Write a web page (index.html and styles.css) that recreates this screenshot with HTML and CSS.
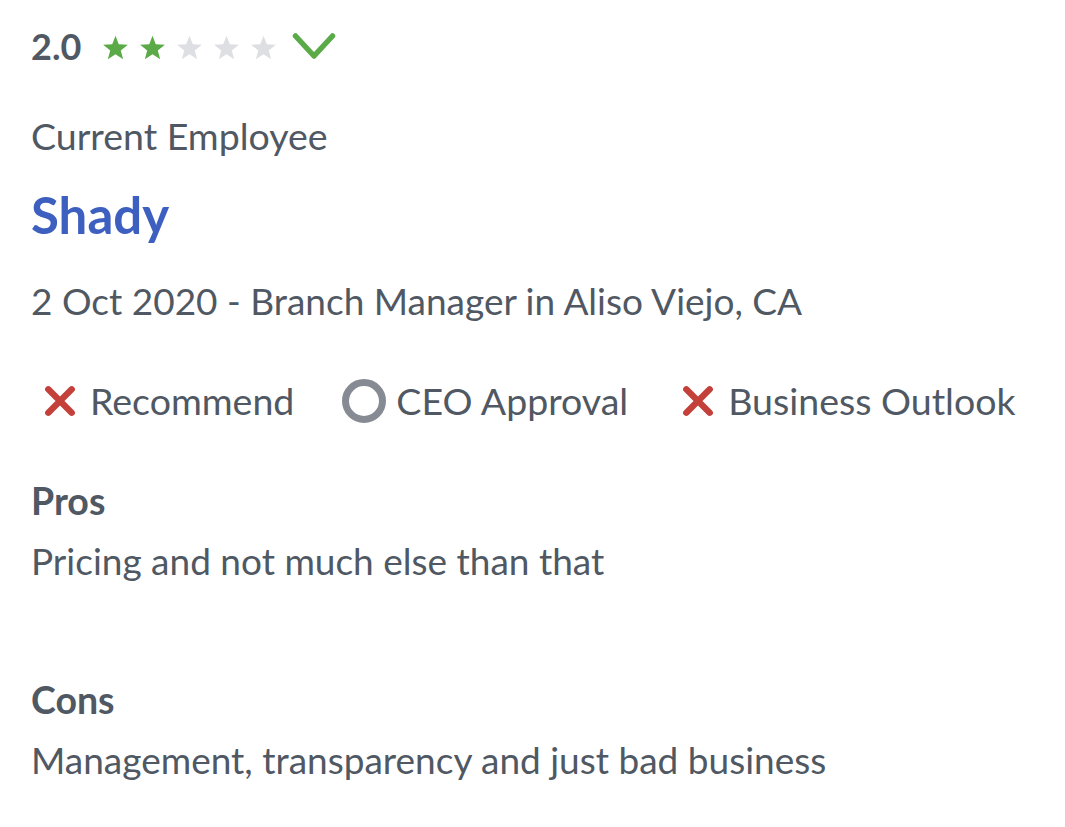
FILE: index.html
```html
<!DOCTYPE html>
<html lang="en">
<head>
<meta charset="utf-8">
<title>Review</title>
<link rel="stylesheet" href="styles.css">
</head>
<body>
<article class="review">
  <div class="rating-row">
    <span class="score">2.0</span>
    <span class="stars">
      <svg class="star on" viewBox="0 0 24 24"><path d="M12 1.5l2.9 7.6 8.1.4-6.3 5.1 2.1 7.9L12 18l-6.8 4.5 2.1-7.9L1 9.5l8.1-.4z"/></svg>
      <svg class="star on" viewBox="0 0 24 24"><path d="M12 1.5l2.9 7.6 8.1.4-6.3 5.1 2.1 7.9L12 18l-6.8 4.5 2.1-7.9L1 9.5l8.1-.4z"/></svg>
      <svg class="star" viewBox="0 0 24 24"><path d="M12 1.5l2.9 7.6 8.1.4-6.3 5.1 2.1 7.9L12 18l-6.8 4.5 2.1-7.9L1 9.5l8.1-.4z"/></svg>
      <svg class="star" viewBox="0 0 24 24"><path d="M12 1.5l2.9 7.6 8.1.4-6.3 5.1 2.1 7.9L12 18l-6.8 4.5 2.1-7.9L1 9.5l8.1-.4z"/></svg>
      <svg class="star" viewBox="0 0 24 24"><path d="M12 1.5l2.9 7.6 8.1.4-6.3 5.1 2.1 7.9L12 18l-6.8 4.5 2.1-7.9L1 9.5l8.1-.4z"/></svg>
    </span>
    <svg class="chevron" viewBox="0 0 44 28"><path d="M3.5 4l18.5 20L40.5 4"/></svg>
  </div>
  <div class="status">Current Employee</div>
  <h2 class="title">Shady</h2>
  <div class="meta">2 Oct 2020 - Branch Manager in Aliso Viejo, CA</div>
  <ul class="outlooks">
    <li class="outlook">
      <svg class="icon-x" viewBox="0 0 32 32"><path d="M5 5l22 22M27 5L5 27"/></svg>
      <span>Recommend</span>
    </li>
    <li class="outlook outlook-o">
      <svg class="icon-o" viewBox="0 0 44 44"><circle cx="22" cy="22" r="18.5"/></svg>
      <span>CEO Approval</span>
    </li>
    <li class="outlook">
      <svg class="icon-x" viewBox="0 0 32 32"><path d="M5 5l22 22M27 5L5 27"/></svg>
      <span>Business Outlook</span>
    </li>
  </ul>
  <section class="block">
    <h3 class="block-title">Pros</h3>
    <p class="block-text">Pricing and not much else than that</p>
  </section>
  <section class="block">
    <h3 class="block-title">Cons</h3>
    <p class="block-text">Management, transparency and just bad business</p>
  </section>
</article>
</body>
</html>
```

FILE: styles.css
```css
html, body {
  margin: 0;
  padding: 0;
  background: #ffffff;
}

body {
  font-family: Lato, "Noto Sans", sans-serif;
  color: #505863;
}

.review {
  padding: 24px 32px 0 31px;
}

.rating-row {
  display: flex;
  align-items: center;
  height: 44px;
}

.score {
  font-size: 36px;
  font-weight: 700;
  line-height: 44px;
}

.stars {
  display: flex;
  gap: 10px;
  margin-left: 21px;
}

.star {
  width: 27px;
  height: 27px;
  fill: #dedfe3;
  margin-top: 3px;
}

.star.on {
  fill: #5aab48;
}

.chevron {
  width: 44px;
  height: 28px;
  margin-left: 15px;
  fill: none;
  stroke: #5aab48;
  stroke-width: 5.5;
  stroke-linecap: round;
  stroke-linejoin: round;
}

.status {
  margin-top: 39px;
  font-size: 37.5px;
  line-height: 58px;
}

.title {
  margin: 18px 0 0 0;
  font-size: 51px;
  font-weight: 700;
  line-height: 64px;
  color: #3d5fbf;
}

.meta {
  margin-top: 25px;
  font-size: 37px;
  line-height: 58px;
}

.outlooks {
  list-style: none;
  margin: 42px 0 0 0;
  padding: 0 0 0 12px;
  display: flex;
  align-items: center;
  gap: 48px;
  font-size: 37.5px;
  line-height: 58px;
}

.outlook {
  display: flex;
  align-items: center;
  gap: 13px;
}

.outlook-o {
  gap: 10px;
  margin-right: 5px;
}

.icon-x {
  width: 34px;
  height: 34px;
  fill: none;
  stroke: #c4403a;
  stroke-width: 6;
  stroke-linecap: round;
}

.icon-o {
  width: 44px;
  height: 44px;
  fill: none;
  stroke: #868a92;
  stroke-width: 7;
}

.outlooks + .block {
  margin-top: 42px;
}

.block + .block {
  margin-top: 81px;
}

.block-title {
  margin: 0;
  font-size: 37.5px;
  font-weight: 700;
  line-height: 58px;
}

.block-text {
  margin: 2px 0 0 0;
  font-size: 37px;
  line-height: 58px;
}
```
